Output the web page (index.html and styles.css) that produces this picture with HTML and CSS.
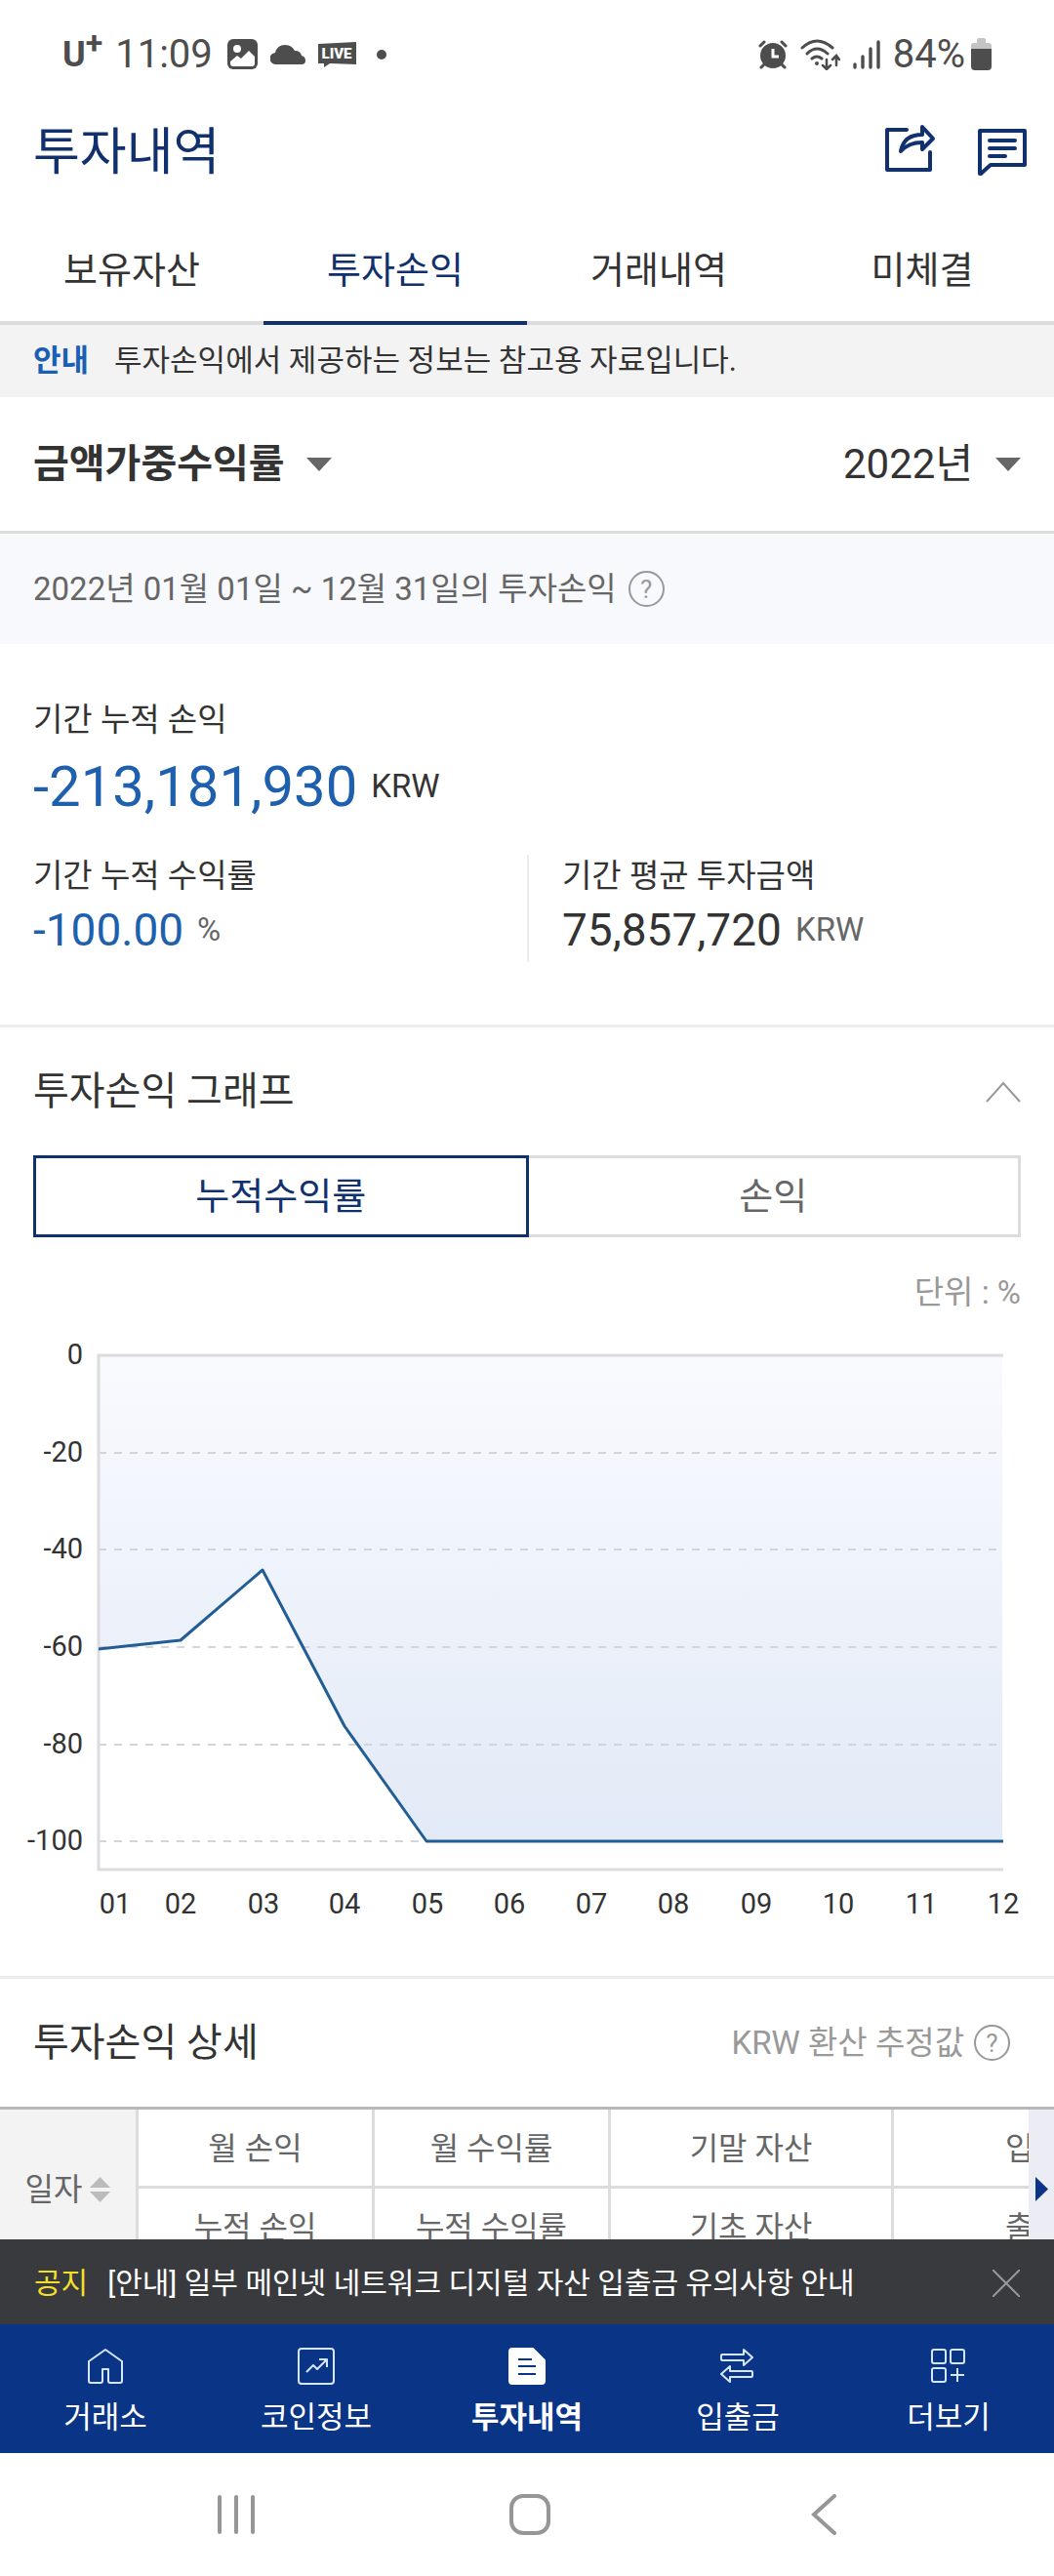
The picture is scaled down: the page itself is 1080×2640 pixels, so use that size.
FILE: index.html
```html
<!DOCTYPE html>
<html lang="ko">
<head>
    <meta charset="UTF-8">
    <meta name="viewport" content="width=device-width, initial-scale=1.0">
    <title>투자내역 - 투자손익</title>
    <link rel="stylesheet" href="styles.css">
</head>
<body>
<div class="app">
    <div class="status-bar">
        <div class="status-left">
            <span class="carrier">U<sup>+</sup></span>
            <span class="clock">11:09</span>
            <svg class="photo-icon" width="31" height="31" viewBox="0 0 31 31">
                <rect width="31" height="31" rx="6" fill="#4d4d4d"/>
                <circle cx="10" cy="10" r="4" fill="#fff"/>
                <path d="M3 23l7-6 4 3 8-8 6 6v7q0 3-3 3H6q-3 0-3-3z" fill="#fff"/>
            </svg>
            <svg class="cloud-icon" width="36" height="20" viewBox="0 0 36 20">
                <path d="M6 20a6 6 0 0 1-1-12Q7 0 15 0q7 0 10 6 6 0 7 5 4 1 4 5 0 4-4 4z" fill="#4d4d4d"/>
            </svg>
            <svg class="live-icon" width="39" height="26" viewBox="0 0 39 26">
                <path d="M0 2L39 0v23L12 22l-6 4v-4H0z" fill="#4d4d4d"/>
                <text x="19" y="17" class="live-text">LIVE</text>
            </svg>
            <span class="dot"></span>
        </div>
        <div class="status-right">
            <svg width="30" height="30" viewBox="0 0 30 30">
                <g fill="none" stroke="#4d4d4d" stroke-width="3" stroke-linecap="round">
                    <path d="M2 6l4-4M28 6l-4-4M6 25l-3 3M24 25l3 3"/>
                </g>
                <circle cx="15" cy="16" r="13" fill="#4d4d4d"/>
                <path d="M15 9v8h6" fill="none" stroke="#fff" stroke-width="3"/>
            </svg>
            <svg width="41" height="32" viewBox="0 0 41 32">
                <g fill="none" stroke="#4d4d4d" stroke-width="3" stroke-linecap="round">
                    <path d="M2 9q15-14 31 0M7 15q10-10 21 0M12 20q5-4 10 0"/>
                    <path d="M27 21v9M23 27l4 4 4-4M37 27v-9M33 21l4-4 3 4" stroke-width="2.5"/>
                </g>
                <circle cx="17" cy="25" r="2" fill="#4d4d4d"/>
            </svg>
            <svg width="28" height="30" viewBox="0 0 28 30">
                <path d="M2 25v3M10 17v11M18 9v19M26 2v26" stroke="#4d4d4d" stroke-width="3.4" stroke-linecap="round"/>
            </svg>
            <span class="battery">
                <span>84%</span>
                <svg width="21" height="33" viewBox="0 0 21 33">
                    <path d="M0 12V8q0-3 3-3h3V2q0-2 2-2h5q2 0 2 2v3h3q3 0 3 3v4z" fill="#c4c4c4"/>
                    <path d="M0 11h21v18q0 4-4 4H4q-4 0-4-4z" fill="#4d4d4d"/>
                </svg>
            </span>
        </div>
    </div>

    <header class="header">
        <h1>투자내역</h1>
        <div class="header-actions">
            <button type="button" aria-label="공유">
                <svg width="52" height="54" viewBox="0 0 52 54">
                    <g fill="none" stroke="#10306e" stroke-width="4" stroke-linecap="round" stroke-linejoin="round">
                        <path d="M22 5H2v41h44V28"/>
                        <path d="M38 2l11 12-11 11v-7q-14 0-22 9 3-17 22-17z"/>
                    </g>
                </svg>
            </button>
            <button type="button" aria-label="채팅">
                <svg width="50" height="54" viewBox="0 0 50 54">
                    <g fill="none" stroke="#10306e" stroke-width="4" stroke-linecap="round" stroke-linejoin="round">
                        <path d="M2 6h46v35H13L3 50H2z"/>
                        <path d="M12 16h26M12 24h26M12 32h16"/>
                    </g>
                </svg>
            </button>
        </div>
    </header>

    <nav class="tabs">
        <a href="#assets">보유자산</a>
        <a href="#profit" class="active">투자손익</a>
        <a href="#trades">거래내역</a>
        <a href="#pending">미체결</a>
    </nav>

    <main class="content">
        <div class="guide">
            <strong>안내</strong>
            <span>투자손익에서 제공하는 정보는 참고용 자료입니다.</span>
        </div>

        <div class="filters">
            <label class="filter filter-type">
                <select aria-label="수익률 종류">
                    <option>금액가중수익률</option>
                </select>
                <svg width="26" height="14" viewBox="0 0 26 14"><path d="M0 0h26L13 14z" fill="#666"/></svg>
            </label>
            <label class="filter filter-year">
                <select aria-label="연도">
                    <option>2022년</option>
                </select>
                <svg width="26" height="14" viewBox="0 0 26 14"><path d="M0 0h26L13 14z" fill="#666"/></svg>
            </label>
        </div>

        <div class="period">
            <span>2022년 01월 01일 ~ 12월 31일의 투자손익</span>
            <button type="button" class="help">?</button>
        </div>

        <section class="summary">
            <p class="label">기간 누적 손익</p>
            <p class="total"><span class="minus">-213,181,930</span> <span class="unit">KRW</span></p>
            <div class="summary-grid">
                <div class="summary-item">
                    <p class="label">기간 누적 수익률</p>
                    <p class="value"><span class="minus">-100.00</span> <span class="unit">%</span></p>
                </div>
                <div class="summary-item">
                    <p class="label">기간 평균 투자금액</p>
                    <p class="value"><span>75,857,720</span> <span class="unit">KRW</span></p>
                </div>
            </div>
        </section>

        <section class="graph">
            <div class="section-head">
                <h2>투자손익 그래프</h2>
                <button type="button" aria-label="접기">
                    <svg width="36" height="22" viewBox="0 0 36 22"><path d="M1 21L18 2l17 19" fill="none" stroke="#999" stroke-width="2"/></svg>
                </button>
            </div>
            <div class="toggle">
                <button type="button" class="active">누적수익률</button>
                <button type="button">손익</button>
            </div>
            <p class="chart-unit">단위 : %</p>
            <svg class="chart" viewBox="0 0 1080 678">
                <defs>
                    <linearGradient id="area" x1="0" y1="0" x2="0" y2="1">
                        <stop offset="0" stop-color="#f9fafe"/>
                        <stop offset="1" stop-color="#e2eaf7"/>
                    </linearGradient>
                </defs>
                <path d="M101 42H1027V540H437L353 422 269 262 185 334 101 343z" fill="url(#area)"/>
                <path class="grid-lines" d="M101 142H1027M101 241H1027M101 341H1027M101 441H1027M101 540H1027"/>
                <path class="axis" d="M1028 42H101V569H1028"/>
                <path class="line" d="M101 343L185 334 269 262 353 422 437 540H1028"/>
                <g class="y-labels">
                    <text x="85" y="51">0</text>
                    <text x="85" y="151">-20</text>
                    <text x="85" y="250">-40</text>
                    <text x="85" y="350">-60</text>
                    <text x="85" y="450">-80</text>
                    <text x="85" y="549">-100</text>
                </g>
                <g class="x-labels">
                    <text x="118" y="614">01</text>
                    <text x="185" y="614">02</text>
                    <text x="270" y="614">03</text>
                    <text x="353" y="614">04</text>
                    <text x="438" y="614">05</text>
                    <text x="522" y="614">06</text>
                    <text x="606" y="614">07</text>
                    <text x="690" y="614">08</text>
                    <text x="775" y="614">09</text>
                    <text x="859" y="614">10</text>
                    <text x="944" y="614">11</text>
                    <text x="1028" y="614">12</text>
                </g>
            </svg>
        </section>

        <section class="detail">
            <div class="section-head">
                <h2>투자손익 상세</h2>
                <div class="estimate">
                    <span>KRW 환산 추정값</span>
                    <button type="button" class="help">?</button>
                </div>
            </div>
            <div class="table-wrap">
                <table>
                    <colgroup>
                        <col class="col-date">
                        <col class="col-rate">
                        <col class="col-rate">
                        <col class="col-asset">
                        <col class="col-asset">
                    </colgroup>
                    <thead>
                        <tr>
                            <th rowspan="2" class="date">
                                <span>일자</span>
                                <svg width="21" height="26" viewBox="0 0 21 26"><path d="M0 11L10.500 0 21 11zM0 15h21L10.500 26z" fill="#bbb"/></svg>
                            </th>
                            <th>월 손익</th>
                            <th>월 수익률</th>
                            <th>기말 자산</th>
                            <th>입금</th>
                        </tr>
                        <tr>
                            <th>누적 손익</th>
                            <th>누적 수익률</th>
                            <th>기초 자산</th>
                            <th>출금</th>
                        </tr>
                    </thead>
                </table>
                <button type="button" class="scroll-next" aria-label="다음">
                    <svg width="13" height="25" viewBox="0 0 13 25"><path d="M0 0l13 12.500L0 25z" fill="#0b3486"/></svg>
                </button>
            </div>
        </section>
    </main>

    <div class="notice">
        <strong>공지</strong>
        <a href="#notice">[안내] 일부 메인넷 네트워크 디지털 자산 입출금 유의사항 안내</a>
        <button type="button" aria-label="닫기">
            <svg width="28" height="28" viewBox="0 0 28 28"><path d="M0 0l28 28M28 0L0 28" stroke="#999" stroke-width="2"/></svg>
        </button>
    </div>

    <nav class="bottom-nav">
        <a href="#exchange">
            <svg width="38" height="38" viewBox="0 0 38 38"><path d="M4 36q-2 0-2-2V14L19 2l17 12v20q0 2-2 2H24q-2 0-2-2V22h-6v12q0 2-2 2z"/></svg>
            <span>거래소</span>
        </a>
        <a href="#coins">
            <svg width="38" height="38" viewBox="0 0 38 38">
                <rect x="1" y="1" width="36" height="36" rx="3"/>
                <path d="M9 25l7-7 4 4 10-10M22 12h8v8"/>
            </svg>
            <span>코인정보</span>
        </a>
        <a href="#history" class="active">
            <svg width="38" height="38" viewBox="0 0 38 38">
                <path class="filled" d="M4 1h21l12 12v21q0 3-3 3H4q-3 0-3-3V4q0-3 3-3z"/>
                <path class="lines" d="M10 12h14M10 19h18M10 27h18"/>
            </svg>
            <span>투자내역</span>
        </a>
        <a href="#transfer">
            <svg width="38" height="38" viewBox="0 0 38 38">
                <path d="M3 7h22V2l9 8-9 8v-5H3q-1 0-1-1V8q0-1 1-1z"/>
                <path d="M33 24H11v-5l-9 8 9 8v-5h22q1 0 1-1v-4q0-1-1-1z"/>
            </svg>
            <span>입출금</span>
        </a>
        <a href="#more">
            <svg width="38" height="38" viewBox="0 0 38 38">
                <rect x="2" y="2" width="14" height="14" rx="2"/>
                <rect x="21" y="2" width="14" height="14" rx="2"/>
                <rect x="2" y="21" width="14" height="14" rx="2"/>
                <path d="M21 28h14M28 21v14"/>
            </svg>
            <span>더보기</span>
        </a>
    </nav>

    <div class="system-nav">
        <button type="button" aria-label="최근 앱">
            <svg width="42" height="42" viewBox="0 0 42 42"><path d="M4 3v36M21 3v36M38 3v36"/></svg>
        </button>
        <button type="button" aria-label="홈">
            <svg width="42" height="42" viewBox="0 0 42 42"><rect x="2" y="2" width="38" height="38" rx="12"/></svg>
        </button>
        <button type="button" aria-label="뒤로">
            <svg width="42" height="42" viewBox="0 0 42 42"><path d="M32 2L11 21l21 19"/></svg>
        </button>
    </div>
</div>
</body>
</html>
```
FILE: styles.css
```css
* {
    box-sizing: border-box;
}

body {
    margin: 0;
    font-family: Roboto, "Noto Sans CJK KR", sans-serif;
    font-size: 33px;
    line-height: 44px;
    color: #333;
    background: #fff;
}

h1, h2, p {
    margin: 0;
    font-weight: 400;
}

a {
    color: inherit;
    text-decoration: none;
}

button {
    display: flex;
    align-items: center;
    justify-content: center;
    padding: 0;
    border: none;
    background: none;
    font: inherit;
    color: inherit;
    cursor: pointer;
}

svg {
    display: block;
    flex: none;
}

.app {
    display: flex;
    flex-direction: column;
    height: 100vh;
    overflow: hidden;
}

/* status bar */
.status-bar {
    display: flex;
    justify-content: space-between;
    align-items: center;
    height: 111px;
    padding: 0 64px;
    color: #4d4d4d;
    font-size: 40px;
}

.status-left, .status-right {
    display: flex;
    align-items: center;
}

.status-left {
    gap: 13px;
}

.carrier {
    font-size: 36px;
    font-weight: 700;
}

.carrier sup {
    font-size: 32px;
    line-height: 0;
}

.photo-icon {
    margin-left: 2px;
}

.live-text {
    font-size: 15px;
    font-weight: 900;
    fill: #fff;
    text-anchor: middle;
}

.dot {
    width: 10px;
    height: 10px;
    margin-left: 8px;
    border-radius: 50%;
    background: #4d4d4d;
}

.status-right {
    gap: 13px;
}

.battery {
    display: flex;
    align-items: center;
    gap: 6px;
}

/* header */
.header {
    display: flex;
    justify-content: space-between;
    align-items: center;
    height: 88px;
    padding: 0 28px 0 34px;
}

.header h1 {
    padding-top: 4px;
    font-size: 52px;
    line-height: 64px;
    color: #10306e;
}

.header-actions {
    display: flex;
    gap: 43px;
}

.tabs {
    display: flex;
    flex: none;
    margin-top: 24px;
}

.tabs a {
    flex: 1;
    height: 110px;
    border-bottom: 4px solid #dcdcdc;
    font-size: 38px;
    line-height: 108px;
    text-align: center;
}

.tabs .active {
    border-color: #10306e;
    color: #10306e;
}

.content {
    flex: 1;
    min-height: 0;
    overflow: hidden;
}

.guide {
    display: flex;
    align-items: center;
    gap: 26px;
    height: 74px;
    padding: 0 34px;
    background: #f3f3f3;
    font-size: 31px;
}

.guide strong {
    color: #1a5fb4;
}

/* filters */
.filters {
    display: flex;
    justify-content: space-between;
    height: 140px;
    padding: 0 34px;
    border-bottom: 3px solid #dcdcdc;
}

.filter {
    display: flex;
    align-items: center;
    gap: 22px;
}

.filter select {
    appearance: none;
    padding: 0;
    border: none;
    background: none;
    font: inherit;
    line-height: 60px;
    color: #333;
}

.filter-type select {
    font-size: 40px;
    font-weight: 700;
}

.filter-year select {
    font-size: 42px;
}

.period {
    display: flex;
    align-items: center;
    gap: 12px;
    height: 113px;
    padding: 0 34px;
    background: #f8f9fc;
    color: #666;
}

.help {
    width: 37px;
    height: 37px;
    border: 2px solid #999;
    border-radius: 50%;
    font-size: 26px;
    line-height: 32px;
    color: #999;
}

/* summary */
.summary {
    padding: 56px 34px 64px;
    border-bottom: 3px solid #ececec;
}

.total, .value {
    display: flex;
    align-items: center;
    gap: 14px;
}

.total {
    font-size: 58px;
    line-height: 92px;
}

.value {
    font-size: 46px;
    line-height: 66px;
}

.minus {
    color: #1e60ad;
}

.unit {
    font-size: 33px;
}

.value .unit {
    color: #666;
}

.summary-grid {
    display: grid;
    grid-template-columns: 1fr 1fr;
    margin-top: 24px;
}

.summary-item + .summary-item {
    padding-left: 34px;
    border-left: 2px solid #ececec;
}

/* graph */
.section-head {
    display: flex;
    justify-content: space-between;
    align-items: center;
    height: 131px;
    padding: 0 34px;
}

.section-head h2 {
    font-size: 40px;
}

.toggle {
    display: flex;
    margin: 0 34px;
}

.toggle button {
    flex: 1;
    height: 84px;
    border: 3px solid #dcdcdc;
    border-left: none;
    font-size: 38px;
    color: #666;
}

.toggle .active {
    border: 3px solid #10306e;
    color: #10306e;
}

.chart-unit {
    margin-top: 35px;
    padding: 0 34px;
    text-align: right;
    color: #999;
}

.chart {
    width: 100%;
    font-size: 29px;
    fill: #333;
}

.grid-lines {
    fill: none;
    stroke: #d2d5da;
    stroke-width: 2;
    stroke-dasharray: 8 8;
}

.axis {
    fill: none;
    stroke: #dcdcdf;
    stroke-width: 3;
}

.line {
    fill: none;
    stroke: #225d96;
    stroke-width: 3;
    stroke-linejoin: round;
}

.y-labels {
    text-anchor: end;
}

.x-labels {
    text-anchor: middle;
}

/* detail table */
.detail {
    border-top: 3px solid #ececec;
}

.estimate {
    display: flex;
    align-items: center;
    gap: 10px;
    margin-right: 11px;
    color: #999;
}

.table-wrap {
    position: relative;
    overflow: hidden;
    border-top: 3px solid #b8b8b8;
}

table {
    width: 1206px;
    table-layout: fixed;
    border-collapse: separate;
    border-spacing: 0;
}

.col-date {
    width: 142px;
}

.col-rate {
    width: 242px;
}

.col-asset {
    width: 290px;
}

th {
    height: 81px;
    padding: 2px 0 0;
    border-right: 3px solid #dcdcdc;
    border-bottom: 3px solid #dcdcdc;
    font-size: 32px;
    font-weight: 400;
    color: #666;
}

.date {
    background: #f3f3f3;
}

.date span, .date svg {
    display: inline-block;
    vertical-align: middle;
}

.scroll-next {
    position: absolute;
    top: 0;
    right: 0;
    bottom: 0;
    width: 26px;
    background: #ecedf4;
}

/* bottom */
.notice {
    display: flex;
    flex: none;
    align-items: center;
    gap: 20px;
    height: 87px;
    padding: 3px 35px 0;
    background: #393a3e;
    color: #fff;
    font-size: 30px;
}

.notice strong {
    font-weight: 400;
    color: #f3df2a;
}

.notice button {
    margin-left: auto;
}

.bottom-nav {
    display: flex;
    flex: none;
    height: 132px;
    background: #0a3486;
    color: #fff;
    font-size: 31px;
}

.bottom-nav a {
    display: flex;
    flex: 1;
    flex-direction: column;
    align-items: center;
    gap: 12px;
    padding-top: 24px;
}

.bottom-nav svg {
    fill: none;
    stroke: #d6e6ff;
    stroke-width: 2;
    stroke-linejoin: round;
}

.bottom-nav .active {
    font-weight: 700;
}

.bottom-nav .filled {
    fill: #fff;
    stroke: #fff;
}

.bottom-nav .lines {
    stroke: #0a3486;
}

.system-nav {
    display: flex;
    flex: none;
    justify-content: space-around;
    height: 126px;
    padding: 0 86px 0 92px;
}

.system-nav svg {
    fill: none;
    stroke: #969696;
    stroke-width: 4;
    stroke-linecap: round;
}
```
